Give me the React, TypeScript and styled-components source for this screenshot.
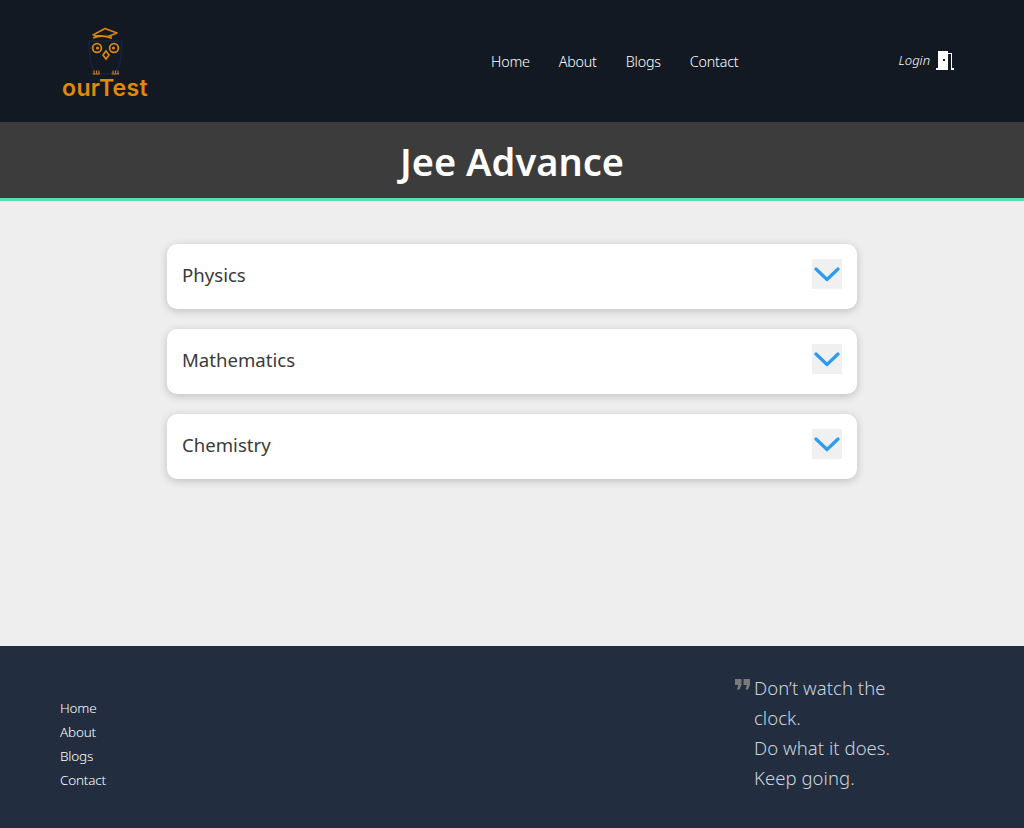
import React from "react";
import styled, { createGlobalStyle } from "styled-components";

const Global = createGlobalStyle`
  html, body { margin: 0; padding: 0; background: #eeeeee; }
  body { font-family: "Noto Sans", "Open Sans", sans-serif; }
`;

const Page = styled.div`
  width: 1024px;
  height: 828px;
  display: flex;
  flex-direction: column;
  overflow: hidden;
`;

const Header = styled.header`
  height: 122px;
  background: #121923;
  display: flex;
  align-items: center;
  flex-shrink: 0;
`;

const LogoBox = styled.div`
  width: 88px;
  margin-left: 61px;
  display: flex;
  flex-direction: column;
  align-items: center;
`;

const LogoWord = styled.span`
  font-family: Inter, sans-serif;
  font-weight: 600;
  font-size: 23px;
  line-height: 24px;
  height: 24px;
  color: #e08a0c;
  letter-spacing: 0.3px;
  margin-top: -1px;
`;

const Nav = styled.nav`
  display: flex;
  gap: 29px;
  margin-left: 342px;
  margin-top: 1px;
`;

const NavLink = styled.a`
  color: #fff;
  font-size: 14.3px;
  font-weight: 300;
  line-height: 20px;
  letter-spacing: -0.2px;
`;

const LoginBox = styled.div`
  margin-left: auto;
  margin-right: 70px;
  display: flex;
  align-items: center;
  gap: 6px;
  color: #fff;
  font-size: 13px;
  font-style: italic;
  font-weight: 300;
  margin-top: -2px;
`;

const Banner = styled.div`
  height: 76px;
  background: #3c3c3c;
  border-bottom: 3px solid #55dfb4;
  display: flex;
  align-items: center;
  justify-content: center;
  flex-shrink: 0;
`;

const Title = styled.h1`
  margin: 1px 0 0;
  color: #fff;
  font-size: 38px;
  font-weight: 600;
  line-height: 48px;
`;

const Main = styled.main`
  flex: 1;
  background: #eeeeee;
  display: flex;
  flex-direction: column;
  align-items: center;
  gap: 20px;
  padding-top: 43px;
`;

const Card = styled.div`
  width: 690px;
  height: 65px;
  box-sizing: border-box;
  background: #fff;
  border-radius: 10px;
  box-shadow: 0 2px 8px rgba(0, 0, 0, 0.2);
  display: flex;
  align-items: center;
  justify-content: space-between;
  padding: 0 15px;
`;

const CardLabel = styled.span`
  font-size: 18.6px;
  font-weight: 400;
  color: #3a3a3a;
  line-height: 28px;
  margin-top: -4px;
`;

const ChevronBox = styled.div`
  width: 30px;
  height: 30px;
  margin-top: -5px;
  background: #f0f0f0;
  display: flex;
  align-items: center;
  justify-content: center;
`;

const Footer = styled.footer`
  height: 182px;
  background: #222e3f;
  display: flex;
  justify-content: space-between;
  flex-shrink: 0;
`;

const FootLinks = styled.div`
  display: flex;
  flex-direction: column;
  padding: 50px 0 0 60px;
`;

const FootLink = styled.a`
  color: #fff;
  font-size: 13.5px;
  font-weight: 300;
  line-height: 24px;
  letter-spacing: -0.2px;
`;

const Quote = styled.div`
  display: flex;
  width: 290px;
  padding-top: 27px;
  gap: 4px;
`;

const QuoteMark = styled.div`
  width: 15px;
  margin-top: 6px;
  margin-left: 1px;
  flex-shrink: 0;
`;

const QuoteText = styled.p`
  margin: 0;
  width: 150px;
  color: #ccd3dd;
  font-size: 18.5px;
  font-weight: 300;
  line-height: 30px;
  letter-spacing: 0.05px;
`;

const Chevron = () => (
  <svg width="26" height="16" viewBox="0 0 26 16" fill="none">
    <path d="M2 3 L13 13.5 L24 3" stroke="#2f9bf0" strokeWidth="3.2" strokeLinecap="round" strokeLinejoin="round" />
  </svg>
);

const Owl = () => (
  <svg width="44" height="54" viewBox="0 0 44 54" fill="none" style={{ display: "block" }}>
    <path d="M10 12 L22 5.5 L34 10 L25 13.5 Z M12 12 V15.5 M28 12.5 V16 M10 15 Q19 11.5 28 15" stroke="#d9860f" strokeWidth="1.5" strokeLinejoin="round" />
    <path d="M6 18 L39 18 L38 32 Q38 51 22.5 51 Q7 51 7 32 Z" stroke="#16233c" strokeWidth="1.6" />
    <circle cx="14" cy="25" r="4.4" stroke="#d9860f" strokeWidth="1.8" />
    <circle cx="31" cy="25" r="4.4" stroke="#d9860f" strokeWidth="1.8" />
    <circle cx="14.5" cy="25" r="1.6" fill="#d9860f" />
    <circle cx="30.5" cy="25" r="1.6" fill="#d9860f" />
    <path d="M23 28 L26 32 L23 36 L20 32 Z" stroke="#d9860f" strokeWidth="1.7" />
    <path d="M9.5 51 H17 M28.5 51 H36 M11 47.5 V51 M13.5 47.5 V51 M16 47.5 V51 M30 47.5 V51 M32.5 47.5 V51 M35 47.5 V51" stroke="#c87f14" strokeWidth="1.1" />
  </svg>
);

const Door = () => (
  <svg width="18" height="19" viewBox="0 0 18 19" fill="#fff" style={{ display: "block" }}>
    <path fillRule="evenodd" d="M2 0 H12 V16 H12 V19 H0 V17 H2 Z M7 8 V10 H9 V8 Z" />
    <path d="M12 2 H16 V17 H18 V19 H15 V3 H12 Z" />
  </svg>
);

const QuoteIcon = () => (
  <svg width="15" height="11" viewBox="0 0 15 11" fill="#7a7a7a" style={{ display: "block" }}>
    <path d="M0 0 H6.5 V6 L4.5 10.5 H2 L3.2 6 H0 Z M8.5 0 H15 V6 L13 10.5 H10.5 L11.7 6 H8.5 Z" />
  </svg>
);

const nav = ["Home", "About", "Blogs", "Contact"];
const subjects = ["Physics", "Mathematics", "Chemistry"];

export default function App() {
  return (
    <Page>
      <Global />
      <Header>
        <LogoBox>
          <Owl />
          <LogoWord>ourTest</LogoWord>
        </LogoBox>
        <Nav>
          {nav.map((n) => (
            <NavLink key={n}>{n}</NavLink>
          ))}
        </Nav>
        <LoginBox>
          <span>Login</span>
          <Door />
        </LoginBox>
      </Header>
      <Banner>
        <Title>Jee Advance</Title>
      </Banner>
      <Main>
        {subjects.map((s) => (
          <Card key={s}>
            <CardLabel>{s}</CardLabel>
            <ChevronBox>
              <Chevron />
            </ChevronBox>
          </Card>
        ))}
      </Main>
      <Footer>
        <FootLinks>
          {nav.map((n) => (
            <FootLink key={n}>{n}</FootLink>
          ))}
        </FootLinks>
        <Quote>
          <QuoteMark>
            <QuoteIcon />
          </QuoteMark>
          <QuoteText>
            Don’t watch the clock.
            <br />
            Do what it does.
            <br />
            Keep going.
          </QuoteText>
        </Quote>
      </Footer>
    </Page>
  );
}
